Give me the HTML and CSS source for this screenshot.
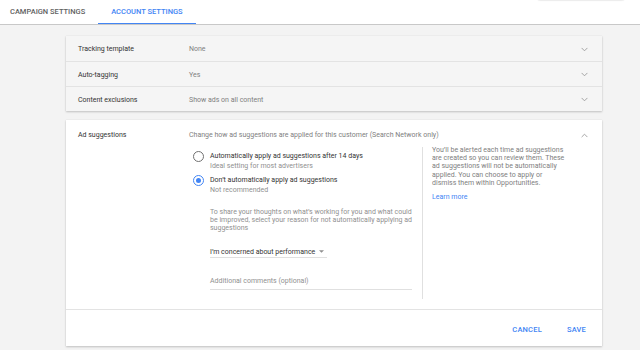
FILE: index.html
```html
<!DOCTYPE html>
<html>
<head>
<meta charset="utf-8">
<link rel="stylesheet" href="styles.css">
</head>
<body>
<header class="topbar">
  <nav class="tabs">
    <div class="tab">CAMPAIGN SETTINGS</div>
    <div class="tab active">ACCOUNT SETTINGS</div>
  </nav>
  <div class="menu-edge"></div>
</header>
<main class="main">
  <section class="card summary">
    <div class="row">
      <div class="label">Tracking template</div>
      <div class="value">None</div>
      <svg class="chev" viewBox="0 0 8 5"><path d="M0.7 0.7 L4 4 L7.3 0.7" /></svg>
    </div>
    <div class="row">
      <div class="label">Auto-tagging</div>
      <div class="value">Yes</div>
      <svg class="chev" viewBox="0 0 8 5"><path d="M0.7 0.7 L4 4 L7.3 0.7" /></svg>
    </div>
    <div class="row">
      <div class="label">Content exclusions</div>
      <div class="value">Show ads on all content</div>
      <svg class="chev" viewBox="0 0 8 5"><path d="M0.7 0.7 L4 4 L7.3 0.7" /></svg>
    </div>
  </section>

  <section class="card detail">
    <div class="detail-body">
      <div class="label title">Ad suggestions</div>
      <div class="detail-content">
        <div class="desc">Change how ad suggestions are applied for this customer (Search Network only)</div>
        <div class="columns">
          <div class="left">
            <div class="option">
              <span class="radio"></span>
              <div class="opt-text">
                <div class="opt-label">Automatically apply ad suggestions after 14 days</div>
                <div class="opt-sub">Ideal setting for most advertisers</div>
              </div>
            </div>
            <div class="option">
              <span class="radio checked"></span>
              <div class="opt-text">
                <div class="opt-label">Don’t automatically apply ad suggestions</div>
                <div class="opt-sub">Not recommended</div>
              </div>
            </div>
            <div class="indent">
              <p class="share">To share your thoughts on what’s working for you and what could be improved, select your reason for not automatically applying ad suggestions</p>
              <div class="select">
                <span>I’m concerned about performance</span>
                <svg class="caret" viewBox="0 0 6 3"><path d="M0 0 L6 0 L3 3 Z" /></svg>
              </div>
              <div class="comments">Additional comments (optional)</div>
            </div>
          </div>
          <div class="right">
            <p class="info">You’ll be alerted each time ad suggestions are created so you can review them. These ad suggestions will not be automatically applied. You can choose to apply or dismiss them within Opportunities.</p>
            <a class="link">Learn more</a>
          </div>
        </div>
      </div>
      <svg class="chev up" viewBox="0 0 8 5"><path d="M0.7 4.3 L4 1 L7.3 4.3" /></svg>
    </div>
    <div class="footer">
      <button class="btn">CANCEL</button>
      <button class="btn">SAVE</button>
    </div>
  </section>
</main>
</body>
</html>
```

FILE: styles.css
```css
* { box-sizing: border-box; }
html, body { margin: 0; padding: 0; }
body {
  background: #f3f3f3;
  font-family: Roboto, "Liberation Sans", Arial, sans-serif;
  font-size: 7px;
  color: #3c4043;
  width: 640px;
  height: 350px;
  overflow: hidden;
}
.topbar {
  position: relative;
  height: 25px;
  background: #fff;
  border-bottom: 1px solid #c8c8c8;
}
.tabs { display: flex; height: 24px; }
.tab {
  font-size: 7.5px;
  font-weight: 500;
  color: #616161;
  padding: 0 10px;
  line-height: 24px;
  height: 24px;
}
.tab.active {
  color: #4285f4;
  margin-left: 3px;
  padding: 0 13px;
  border-bottom: 1.5px solid #4285f4;
}
.menu-edge {
  position: absolute;
  right: 15px;
  top: -8px;
  width: 88px;
  height: 8px;
  border-radius: 3px;
  background: #fff;
  box-shadow: 0 1px 1px rgba(0,0,0,0.08);
}
.main {
  padding: 11px 0 0 66px;
  display: flex;
  flex-direction: column;
  gap: 9px;
}
.card {
  width: 536px;
  box-shadow: 0 1px 2px rgba(0,0,0,0.2), 0 0 1px rgba(0,0,0,0.1);
}
.summary { background: #f5f5f5; }
.row {
  display: flex;
  align-items: center;
  height: 25px;
  padding: 1px 14px 0 12px;
  border-top: 1px solid #e3e3e3;
}
.row:first-child { border-top: none; }
.label {
  width: 111px;
  color: #333;
  flex: none;
}
.value { flex: 1; color: #808080; }
.chev {
  width: 7px;
  height: 5px;
  flex: none;
  fill: none;
  stroke: #9a9a9a;
  stroke-width: 1;
}
.detail { background: #fff; }
.detail-body {
  display: flex;
  align-items: flex-start;
  padding: 11px 14px 10px 12px;
  height: 189px;
}
.title { line-height: 9px; }
.detail-content { flex: 1; }
.desc { color: #808080; line-height: 8px; }
.chev.up { margin-top: 2px; }
.columns {
  display: flex;
  margin-top: 8px;
}
.left {
  width: 234px;
  padding-left: 4px;
  border-right: 1px solid #e0e0e0;
  padding-bottom: 9px;
}
.option { display: flex; align-items: flex-start; margin-top: 5px; }
.option + .option { margin-top: 5px; }
.radio {
  width: 11px;
  height: 11px;
  border: 1.2px solid #707070;
  border-radius: 50%;
  margin-top: -1px;
  margin-right: 6px;
  flex: none;
  position: relative;
}
.radio.checked { border-color: #4285f4; }
.radio.checked::after {
  content: "";
  position: absolute;
  left: 1.6px; top: 1.6px;
  width: 5.4px; height: 5.4px;
  border-radius: 50%;
  background: #4285f4;
}
.opt-label { color: #333; line-height: 9px; }
.opt-sub { color: #909090; line-height: 10px; }
.indent { padding-left: 17px; }
.share {
  margin: 13px 0 0;
  color: #909090;
  line-height: 8px;
  width: 204px;
}
.select {
  margin-top: 14px;
  width: 117px;
  display: flex;
  align-items: center;
  justify-content: space-between;
  color: #333;
  height: 12px;
  white-space: nowrap;
  border-bottom: 1px solid #e0e0e0;
  padding-right: 3px;
}
.caret { width: 5px; height: 3px; fill: #909090; }
.comments {
  margin-top: 19px;
  width: 202px;
  color: #909090;
  height: 13px;
  border-bottom: 1px solid #e0e0e0;
}
.right {
  padding-left: 9px;
  width: 150px;
}
.info {
  margin: -1px 0 0;
  color: #808080;
  line-height: 8.2px;
  width: 136px;
}
.link {
  display: block;
  margin-top: 6px;
  color: #4285f4;
}
.footer {
  display: flex;
  justify-content: flex-end;
  align-items: center;
  gap: 25px;
  height: 37px;
  padding: 2px 16px 0 0;
  border-top: 1px solid #e3e3e3;
}
.btn {
  background: none;
  border: none;
  padding: 0;
  font-family: inherit;
  font-size: 7.5px;
  font-weight: 500;
  color: #4285f4;
  letter-spacing: 0.2px;
}
```
